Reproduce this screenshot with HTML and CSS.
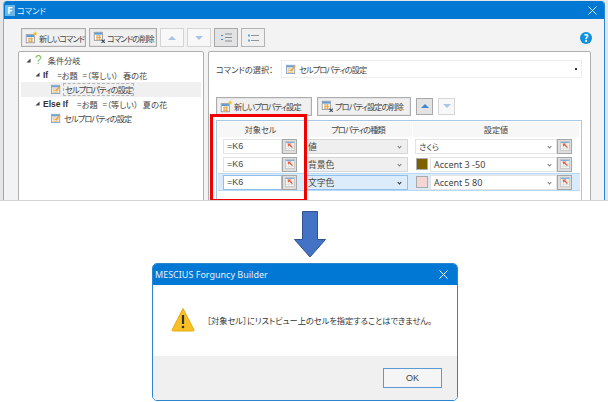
FILE: index.html
```html
<!DOCTYPE html>
<html lang="ja">
  <head>
    <meta charset="UTF-8" />
    <title>コマンド</title>
    <link rel="stylesheet" href="styles.css">
  </head>
  <body>
    <svg class="defs" width="0" height="0">
      <symbol id="ico-new" viewBox="0 0 16 16">
        <rect x="1.5" y="4.5" width="10" height="10" fill="#fff" stroke="#8a8f96"/>
        <rect x="2" y="5" width="9" height="2.5" fill="#5b9bd5"/>
        <path d="M4 9h6M4 11h6M4 13h6M5 8v6M8 8v6" stroke="#e2a13c"/>
        <path d="M12.5 0l.8 2 2 .2-1.5 1.4.5 2.1-1.8-1.1-1.8 1.1.5-2.1-1.5-1.4 2-.2z" fill="#f5c325"/>
      </symbol>
      <symbol id="ico-del" viewBox="0 0 16 16">
        <rect x="1.5" y="1.5" width="10" height="10" fill="#fff" stroke="#8a8f96"/>
        <rect x="2" y="2" width="9" height="2.5" fill="#5b9bd5"/>
        <path d="M4 6h6M4 8h6M4 10h6M5 5v6M8 5v6" stroke="#e2a13c"/>
        <path d="M10.5 10.5l4 4M14.5 10.5l-4 4" stroke="#39424e" stroke-width="1.4"/>
      </symbol>
      <symbol id="ico-prop" viewBox="0 0 12 12">
        <rect x=".5" y="1.5" width="10" height="10" fill="#eef3f8" stroke="#7f9fc0"/>
        <rect x="1" y="2" width="9" height="2" fill="#6d9fd0"/>
        <path d="M2 6h7M2 8h7M2 10h7" stroke="#e8b45a"/>
        <path d="M5 8l5-6 1.500 1-5 6z" fill="#f0a23c"/>
      </symbol>
      <symbol id="ico-pick" viewBox="0 0 12 12">
        <rect x=".5" y=".5" width="11" height="11" fill="#f7f7f7" stroke="#c4c4c4"/>
        <rect x="1" y="1" width="10" height="1.500" fill="#7fb0dc"/>
        <path d="M1 6h10M1 9h10M4 3v8M8 3v8" stroke="#dcdcdc"/>
        <path d="M3 3h4.500L6.300 4.200 9.500 7.400 8.400 8.500 5.200 5.300 4 6.500z" fill="#e8603c"/>
      </symbol>
      <symbol id="ico-tri" viewBox="0 0 6 6">
        <path d="M5.500 .5v5h-5z" fill="#444"/>
      </symbol>
    </svg>

    <div class="top-shot">
      <section class="cmd-window">
        <header class="titlebar">
          <span class="app-icon">F</span>
          <span class="titlebar-text">コマンド</span>
          <svg width="9" height="9"><path d="M.5 .5l8 8M8.500 .5l-8 8" stroke="#e6f1fa"/></svg>
        </header>

        <div class="toolbar">
          <button class="tool-btn cmd-new"><svg class="ico16"><use href="#ico-new"/></svg><span class="tight">新しいコマンド</span></button>
          <button class="tool-btn cmd-del"><svg class="ico16"><use href="#ico-del"/></svg><span class="tight">コマンドの削除</span></button>
          <button class="arrow-btn arrow-wide is-off"><span class="tri-up"></span></button>
          <button class="arrow-btn arrow-wide is-off"><span class="tri-down"></span></button>
          <button class="arrow-btn arrow-wide is-on">
            <svg width="11" height="9"><path d="M4 1h7M4 4.500h7M4 8h7" stroke="#868e96" stroke-width="1.200"/><path d="M0 2.500h2M0 6.500h2" stroke="#2f8ee0" stroke-width="1.200"/></svg>
          </button>
          <button class="arrow-btn arrow-wide is-plain">
            <svg width="11" height="8"><path d="M3 1.500h8M3 6.500h8" stroke="#8d959c"/><path d="M1 .5v2M1 5.500v2" stroke="#2f8ee0" stroke-width="1.500"/></svg>
          </button>
          <span class="help">?</span>
        </div>

        <div class="panels">
          <div class="tree">
            <div class="tree-row">
              <svg class="tri"><use href="#ico-tri"/></svg>
              <span class="question">?</span>
              <span>条件分岐</span>
            </div>
            <div class="tree-row lvl1">
              <svg class="tri"><use href="#ico-tri"/></svg>
              <b class="kw">If</b><span class="cond">=お題 =（等しい） 春の花</span>
            </div>
            <div class="tree-row lvl2 selected">
              <svg class="ico12"><use href="#ico-prop"/></svg>
              <span class="focus tight">セルプロパティの設定</span>
            </div>
            <div class="tree-row lvl1">
              <svg class="tri"><use href="#ico-tri"/></svg>
              <b class="kw">Else If</b><span class="cond">=お題 =（等しい） 夏の花</span>
            </div>
            <div class="tree-row lvl2">
              <svg class="ico12"><use href="#ico-prop"/></svg>
              <span class="tight">セルプロパティの設定</span>
            </div>
          </div>

          <div class="detail">
            <div class="cmd-select-row">
              <span class="cmd-select-label">コマンドの選択：</span>
              <div class="cmd-select">
                <svg class="ico12"><use href="#ico-prop"/></svg>
                <span class="tight">セルプロパティの設定</span>
                <span class="dot-arrow"></span>
              </div>
            </div>

            <div class="prop-toolbar">
              <button class="tool-btn prop-new"><svg class="ico16"><use href="#ico-new"/></svg><span class="tight">新しいプロパティ設定</span></button>
              <button class="tool-btn prop-del"><svg class="ico16"><use href="#ico-del"/></svg><span class="tight">プロパティ設定の削除</span></button>
              <button class="arrow-btn is-on"><span class="tri-up strong"></span></button>
              <button class="arrow-btn is-off"><span class="tri-down"></span></button>
            </div>

            <div class="prop-grid">
              <div class="grid-head">対象セル</div>
              <div class="grid-head"><span class="tight">プロパティの種類</span></div>
              <div class="grid-head">設定値</div>

              <div class="grid-row">
                <div class="cell-target"><span class="txt-box">=K6</span><span class="pick"><svg class="ico12"><use href="#ico-pick"/></svg></span></div>
                <div class="combo-grey"><span>値</span><span class="chev"></span></div>
                <div class="cell-value"><span class="txt-box wide">さくら<span class="chev"></span></span><span class="pick"><svg class="ico12"><use href="#ico-pick"/></svg></span></div>
              </div>
              <div class="grid-row">
                <div class="cell-target"><span class="txt-box">=K6</span><span class="pick"><svg class="ico12"><use href="#ico-pick"/></svg></span></div>
                <div class="combo-grey"><span>背景色</span><span class="chev"></span></div>
                <div class="cell-value"><span class="swatch brown"></span><span class="txt-box wide latin">Accent 3 -50<span class="chev"></span></span><span class="pick"><svg class="ico12"><use href="#ico-pick"/></svg></span></div>
              </div>
              <div class="grid-row current">
                <div class="cell-target"><span class="txt-box active">=K6</span><span class="pick"><svg class="ico12"><use href="#ico-pick"/></svg></span></div>
                <div class="combo-grey open"><span>文字色</span><span class="chev dark"></span></div>
                <div class="cell-value"><span class="swatch pink"></span><span class="txt-box wide latin">Accent 5 80<span class="chev"></span></span><span class="pick"><svg class="ico12"><use href="#ico-pick"/></svg></span></div>
              </div>
            </div>

            <div class="red-mark"></div>
          </div>
        </div>
      </section>
    </div>

    <div class="down-arrow">
      <svg width="34" height="48"><path d="M9.500 .5h15v28h8L17 46 1.500 28.500h8z" fill="#4472c4" stroke="#2f528f"/></svg>
    </div>

    <section class="dialog">
      <header class="dialog-title">
        <span>MESCIUS Forguncy Builder</span>
        <svg width="9" height="9"><path d="M.5 .5l8 8M8.500 .5l-8 8" stroke="#fff"/></svg>
      </header>
      <div class="dialog-body">
        <svg width="24" height="25"><path d="M12 1.500L23 23a1 1 0 0 1-1 1H2a1 1 0 0 1-1-1z" fill="#f8c022" stroke="#e6a817"/><path d="M12 8v9" stroke="#333" stroke-width="2.200"/><circle cx="12" cy="20" r="1.300" fill="#333"/></svg>
        <span>［対象セル］にリストビュー上のセルを指定することはできません。</span>
      </div>
      <div class="dialog-foot">
        <button class="ok-btn">OK</button>
      </div>
    </section>
  </body>
</html>
```

FILE: styles.css
```css
* {
    box-sizing: border-box;
}

body {
    margin: 0;
    width: 608px;
    height: 402px;
    overflow: hidden;
    background-color: white;
    font-family: "Noto Sans CJK JP", "Noto Sans", sans-serif;
    font-size: 8.2px;
    font-feature-settings: "palt";
    color: #444;
}

.defs {
    display: block;
    height: 0;
}

button {
    font-family: inherit;
    font-size: inherit;
    font-feature-settings: inherit;
    color: inherit;
    padding: 0;
}

/* Kana heavy labels run narrower than the kanji ones */
.tight {
    letter-spacing: -0.9px;
}

.ico16 {
    width: 13px;
    height: 13px;
    flex: none;
}

.ico12 {
    width: 10px;
    height: 10px;
    flex: none;
}

/* Strip of the desktop behind the command window */
.top-shot {
    height: 201px;
    padding: 1px 3px 0;
    background-color: #e4e6e8;
    border-bottom: 1px solid #d4d4d4;
}

/* Command window */
.cmd-window {
    width: 602px;
    height: 199px;
    background-color: #f3f3f3;
    border-left: 1px solid #7fb0dc;
    border-right: 1px solid #2b85d0;
    border-radius: 4px 4px 0 0;
    overflow: hidden;
}

.titlebar {
    height: 18px;
    background-color: #0078d4;
    color: #e6f1fa;
    display: flex;
    align-items: center;
    padding: 0 7px 0 1px;
}

.app-icon {
    width: 10px;
    height: 11px;
    background-color: #6ab7ec;
    color: white;
    font-size: 9px;
    font-weight: bold;
    line-height: 11px;
    text-align: center;
    margin-right: 2px;
}

.titlebar-text {
    flex: 1;
}

.toolbar {
    display: flex;
    align-items: center;
    height: 32px;
    padding: 9px 12px 4px 17px;
    gap: 3px;
}

.tool-btn {
    display: flex;
    align-items: center;
    height: 19px;
    background-color: #f0f0f0;
    border: 1px solid #adadad;
    box-shadow: inset 0 0 0 1px #e4e4e4;
    white-space: nowrap;
    padding-left: 3px;
    gap: 1px;
}

.cmd-new {
    width: 65px;
}

.cmd-del {
    width: 68px;
}

.arrow-btn {
    display: flex;
    align-items: center;
    justify-content: center;
    width: 17px;
    height: 17px;
    border: 1px solid #d5d5d5;
    background-color: #f8f8f8;
}

.arrow-wide {
    width: 24px;
    height: 19px;
}

.arrow-btn.is-on {
    background-color: #e3e3e3;
    border-color: #a8a8a8;
}

.arrow-btn.is-plain {
    background-color: #f0f0f0;
    border-color: #b4b4b4;
}

.tri-up,
.tri-down {
    width: 0;
    height: 0;
    border-left: 4px solid transparent;
    border-right: 4px solid transparent;
}

.tri-up {
    border-bottom: 4px solid #a9c4e4;
}

.tri-up.strong {
    border-bottom-color: #3f87d8;
}

.tri-down {
    border-top: 4px solid #a9c4e4;
}

.help {
    margin-left: auto;
    width: 12px;
    height: 12px;
    border-radius: 50%;
    background-color: #0f8fe0;
    color: white;
    font-size: 10px;
    font-weight: bold;
    line-height: 12px;
    text-align: center;
}

.panels {
    display: flex;
    gap: 4px;
    height: 152px;
    padding: 0 13px 0 14px;
}

/* Left tree */
.tree {
    width: 186px;
    background-color: white;
    border: 1px solid #b0b0b0;
    border-radius: 2px 2px 0 0;
    padding: 1px 2px 0;
}

.tree-row {
    display: flex;
    align-items: center;
    height: 14.500px;
    padding-left: 5px;
    gap: 3px;
}

.tri {
    width: 5px;
    height: 5px;
    flex: none;
}

.question {
    color: #7cc142;
    font-size: 12px;
    font-family: "Liberation Sans", sans-serif;
    margin: 0 3px 0 1px;
}

.lvl1 {
    padding-left: 14px;
}

.lvl2 {
    padding-left: 30px;
}

.selected {
    background-color: #f0f0f0;
}

.focus {
    border: 1px dashed #b5b5b5;
    padding: 0 1px;
    line-height: 11px;
    margin-left: -1px;
}

.kw {
    font-family: "Liberation Sans", sans-serif;
    font-size: 8.500px;
    color: #333;
    margin-right: 6px;
}

.cond {
    white-space: pre;
    word-spacing: 3px;
}

/* Right detail panel */
.detail {
    position: relative;
    width: 383px;
    background-color: white;
    border: 1px solid #b0b0b0;
    border-radius: 2px 2px 0 0;
    padding: 8px 8px 0 7px;
}

.cmd-select-row {
    display: flex;
    align-items: center;
    height: 18px;
}

.cmd-select-label {
    width: 65px;
}

.cmd-select {
    display: flex;
    align-items: center;
    flex: 1;
    height: 18px;
    border: 1px solid #eeeeee;
    padding: 0 4px;
    gap: 3px;
}

.dot-arrow {
    margin-left: auto;
    width: 2px;
    height: 2px;
    background-color: #333;
}

.prop-toolbar {
    display: flex;
    align-items: center;
    gap: 5px;
    margin-top: 19px;
    height: 18px;
}

.prop-new {
    width: 96px;
}

.prop-del {
    width: 94px;
}

.prop-grid {
    display: grid;
    grid-template-columns: 86px 109px 1fr;
    align-content: start;
    margin-top: 5px;
    height: 80px;
    padding: 1px 1px 0;
    border: 1px solid #a9c7e8;
    border-bottom: none;
}

.grid-head {
    height: 15px;
    margin-right: 1px;
    background-color: #f7f7f7;
    text-align: center;
    line-height: 15px;
}

.grid-row {
    grid-column: 1 / 4;
    display: grid;
    grid-template-columns: 86px 109px 1fr;
    align-items: center;
    height: 18px;
}

.grid-row.current {
    background-color: #d9ebfb;
    border-top: 1px solid #b8d9f5;
    border-bottom: 1px solid #b8d9f5;
}

.cell-target,
.cell-value {
    display: flex;
    align-items: center;
    padding-left: 5px;
}

.cell-value {
    padding: 0 8px 0 2px;
}

.txt-box {
    position: relative;
    display: flex;
    align-items: center;
    width: 59px;
    height: 15px;
    background-color: white;
    border: 1px solid #e4e4e4;
    padding-left: 3px;
    font-family: "Liberation Sans", sans-serif;
    font-size: 9px;
}

.txt-box.wide {
    flex: 1;
    width: auto;
    font-family: inherit;
    font-size: 8.200px;
}

.txt-box.latin {
    font-family: "Noto Sans", sans-serif;
    font-size: 9px;
}

.txt-box.active {
    border-color: #8fc0ec;
}

.pick {
    display: flex;
    align-items: center;
    justify-content: center;
    flex: none;
    width: 15px;
    height: 15px;
    background-color: #dedede;
    border: 1px solid #a6a6a6;
}

.combo-grey {
    display: flex;
    align-items: center;
    justify-content: space-between;
    height: 15px;
    background-color: #efefef;
    border: 1px solid #d6d6d6;
    padding: 0 6px 0 3px;
    margin-right: 5px;
    font-size: 8.800px;
}

.combo-grey.open {
    background-color: #dcecfb;
    border-color: #8fc0ec;
}

.chev {
    width: 3px;
    height: 3px;
    border-right: 1px solid #777;
    border-bottom: 1px solid #777;
    transform: rotate(45deg);
    flex: none;
}

.txt-box .chev {
    margin-left: auto;
    margin-right: 5px;
}

.chev.dark {
    border-color: #222;
}

.swatch {
    flex: none;
    width: 12px;
    height: 12px;
    margin: 0 2px 0 1px;
    border: 1px solid #aaa;
}

.brown {
    background-color: #7f6000;
}

.pink {
    background-color: #f6d5d5;
}

.red-mark {
    position: absolute;
    left: 1px;
    top: 62px;
    width: 97px;
    height: 88px;
    border: 3px solid #f00000;
}

/* Arrow between the two windows */
.down-arrow {
    display: flex;
    justify-content: center;
    width: 620px;
    height: 62px;
    padding-top: 10px;
}

/* Message dialog */
.dialog {
    width: 306px;
    height: 138px;
    margin-left: 152px;
    border: 1px solid #2b85d0;
    border-radius: 5px;
    overflow: hidden;
    display: flex;
    flex-direction: column;
    background-color: white;
}

.dialog-title {
    display: flex;
    align-items: center;
    justify-content: space-between;
    height: 21px;
    padding: 0 9px 0 2px;
    background-color: #0078d4;
    color: #e6f1fa;
    font-family: "Noto Sans", sans-serif;
    font-size: 9px;
}

.dialog-body {
    flex: 1;
    display: flex;
    align-items: center;
    gap: 12px;
    padding: 0 0 2px 18px;
    color: #333;
}

.dialog-foot {
    display: flex;
    align-items: center;
    justify-content: flex-end;
    height: 44px;
    padding-right: 15px;
    background-color: #f0f0f0;
}

.ok-btn {
    width: 59px;
    height: 20px;
    background-color: #f5f5f5;
    border: 1px solid #5a9bd5;
    font-family: "Liberation Sans", sans-serif;
    font-size: 9px;
}
```
